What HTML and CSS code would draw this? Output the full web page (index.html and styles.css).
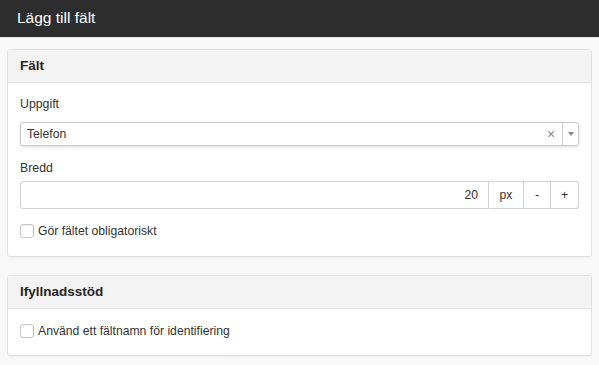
FILE: index.html
```html
<!DOCTYPE html>
<html>
	<head>
		<meta charset="utf-8">
		<link rel="stylesheet" href="styles.css">
	</head>
	<body>
		<div class="topbar">Lägg till fält</div>
		<div class="content">
			<div class="panel">
				<div class="panel-head">Fält</div>
				<div class="panel-body">
					<div class="label">Uppgift</div>
					<div class="select">
						<span class="select-value">Telefon</span>
						<span class="select-clear">×</span>
						<span class="select-arrow"><span class="caret"></span></span>
					</div>
					<div class="label label-gap">Bredd</div>
					<div class="input-group">
						<div class="input">20</div>
						<div class="addon addon-px">px</div>
						<div class="addon addon-btn">-</div>
						<div class="addon addon-btn addon-last">+</div>
					</div>
					<label class="check">
						<span class="box"></span>
						<span>Gör fältet obligatoriskt</span>
					</label>
				</div>
			</div>
			<div class="panel">
				<div class="panel-head">Ifyllnadsstöd</div>
				<div class="panel-body panel-body-short">
					<label class="check check-first">
						<span class="box"></span>
						<span>Använd ett fältnamn för identifiering</span>
					</label>
				</div>
			</div>
		</div>
	</body>
</html>
```

FILE: styles.css
```css
body {
	margin: 0;
	background-color: #f8f8f8;
	font-family: "Liberation Sans", Arial, sans-serif;
	color: #333333;
}
.topbar {
	height: 37px;
	line-height: 35px;
	padding-left: 17px;
	background-color: #2d2d2d;
	color: #ffffff;
	font-size: 15.5px;
	border-bottom: 1px solid #e6e6e6;
}
.content {
	padding: 11px 7px 0px 7px;
}
.panel {
	background-color: #ffffff;
	border: 1px solid #e1e1e1;
	border-radius: 3px;
	box-shadow: 0 1px 1px rgba(0, 0, 0, 0.04);
	margin-bottom: 18px;
}
.panel-head {
	height: 32px;
	line-height: 32px;
	padding: 0px 12px;
	background-color: #f3f3f3;
	border-bottom: 1px solid #e3e3e3;
	border-radius: 3px 3px 0 0;
	font-size: 13.5px;
	font-weight: bold;
	color: #262626;
}
.panel-body {
	padding: 13px 12px 15px 12px;
}
.panel-body-short {
	padding-top: 12px;
	padding-bottom: 14px;
}
.label {
	font-size: 12.3px;
	line-height: 16px;
}
.label-gap {
	margin-top: 14px;
}
.select {
	margin-top: 10px;
	height: 22px;
	display: flex;
	align-items: center;
	border: 1px solid #c8c8c8;
	border-radius: 3px;
	box-shadow: 0 1px 3px rgba(0, 0, 0, 0.14);
	font-size: 12.2px;
}
.select-value {
	flex: 1;
	padding-left: 6px;
}
.select-clear {
	width: 22px;
	text-align: center;
	color: #888888;
	font-size: 14px;
}
.select-arrow {
	width: 15px;
	height: 22px;
	border-left: 1px solid #d0d0d0;
	display: flex;
	align-items: center;
	justify-content: center;
}
.caret {
	width: 0;
	height: 0;
	border-left: 3px solid transparent;
	border-right: 3px solid transparent;
	border-top: 4px solid #888888;
}
.input-group {
	margin-top: 5px;
	display: flex;
	height: 28px;
	font-size: 12.2px;
}
.input {
	flex: 1;
	border: 1px solid #d2d2d2;
	border-radius: 3px 0 0 3px;
	text-align: right;
	line-height: 26px;
	padding-right: 10px;
}
.addon {
	border: 1px solid #d2d2d2;
	border-left: 0px;
	line-height: 26px;
	text-align: center;
	background-color: #ffffff;
}
.addon-px {
	width: 34px;
}
.addon-btn {
	width: 26px;
}
.addon-last {
	width: 27px;
	border-radius: 0 3px 3px 0;
}
.check {
	margin-top: 12px;
	display: flex;
	align-items: center;
	height: 20px;
	font-size: 12.2px;
}
.check-first {
	margin-top: 0px;
}
.box {
	width: 12px;
	height: 12px;
	border: 1px solid #c6c6c6;
	border-radius: 3px;
	background-color: #ffffff;
	margin-right: 4px;
	box-shadow: inset 0 1px 1px rgba(0, 0, 0, 0.05);
}
```
